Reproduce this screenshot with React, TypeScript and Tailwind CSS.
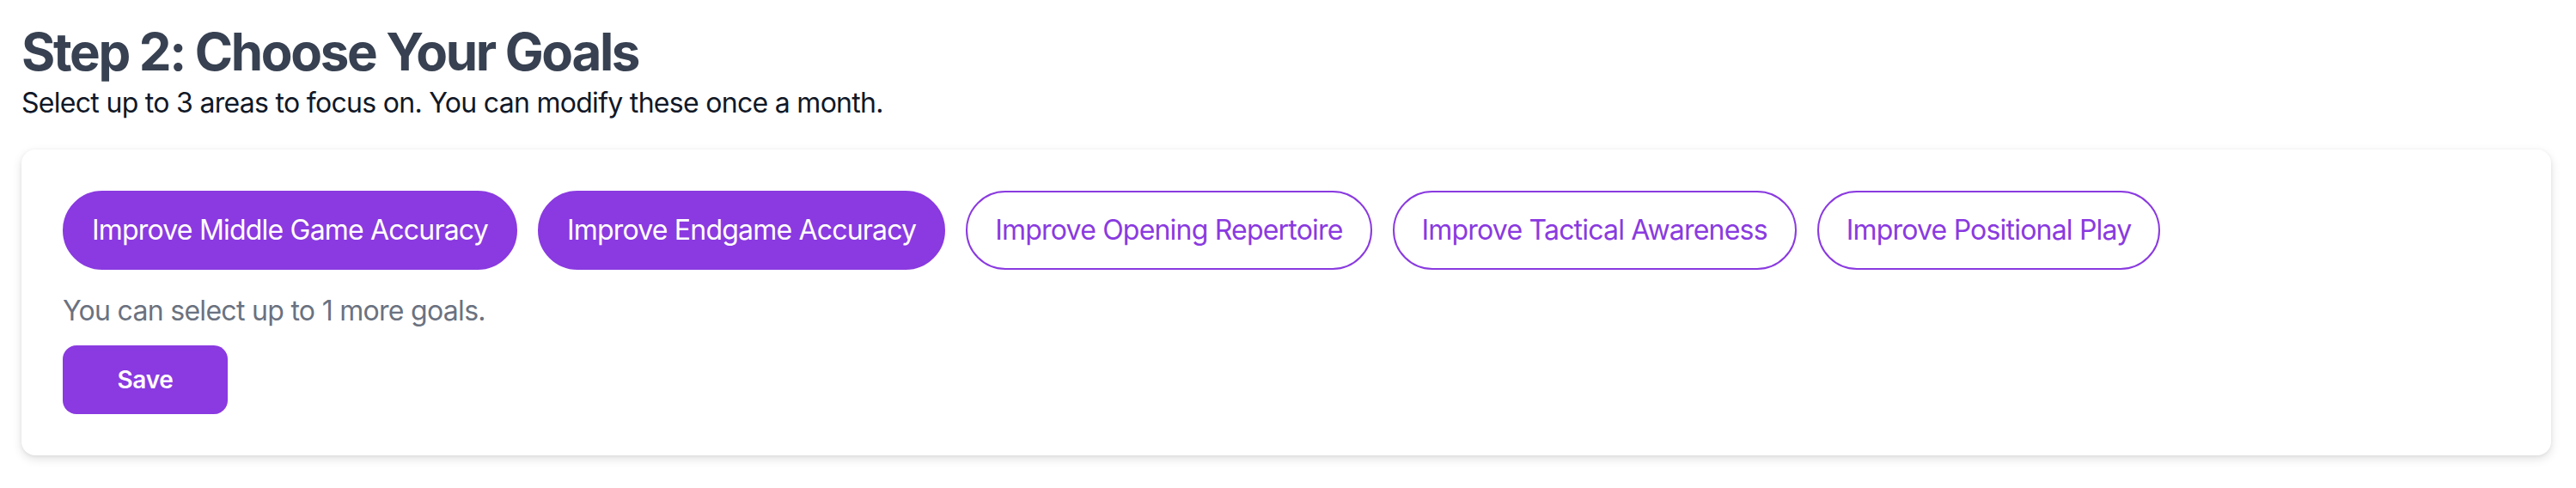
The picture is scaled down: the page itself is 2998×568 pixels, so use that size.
import { useState } from 'react'

// ----------------------------------------------------------------------

const GOALS = [
  'Improve Middle Game Accuracy',
  'Improve Endgame Accuracy',
  'Improve Opening Repertoire',
  'Improve Tactical Awareness',
  'Improve Positional Play',
]

const MAX_GOALS = 3

function GoalChip({
  label,
  selected,
  onClick,
}: {
  label: string
  selected: boolean
  onClick: () => void
}) {
  return (
    <button
      type="button"
      onClick={onClick}
      className={
        selected
          ? 'rounded-full border-2 border-[#8a3ae0] bg-[#8a3ae0] px-8 py-5 text-[32px] leading-[48px] tracking-[-0.025em] text-white'
          : 'rounded-full border-2 border-[#8a3ae0] bg-white px-8 py-5 text-[32px] leading-[48px] tracking-[-0.025em] text-[#8a3ae0]'
      }
    >
      {label}
    </button>
  )
}

export default function App() {
  const [selected, setSelected] = useState<string[]>([GOALS[0], GOALS[1]])

  const toggle = (goal: string) => {
    setSelected((prev) =>
      prev.includes(goal)
        ? prev.filter((g) => g !== goal)
        : prev.length < MAX_GOALS
          ? [...prev, goal]
          : prev
    )
  }

  const remaining = MAX_GOALS - selected.length

  return (
    <div className="min-h-[568px] bg-white pt-6 pl-[25px] pr-[29px] font-['Inter',sans-serif]">
      <h2 className="text-[60px] leading-[72px] font-bold tracking-[-0.039em] text-[#374151]">
        Step 2: Choose Your Goals
      </h2>
      <p className="text-[32px] leading-[48px] tracking-[-0.022em] text-[#111827]">
        Select up to 3 areas to focus on. You can modify these once a month.
      </p>

      <div className="mt-[30px] rounded-2xl bg-white p-12 shadow-[0_4px_12px_rgba(0,0,0,0.12),0_1px_4px_rgba(0,0,0,0.06)]">
        <div className="flex flex-wrap gap-6">
          {GOALS.map((goal) => (
            <GoalChip
              key={goal}
              label={goal}
              selected={selected.includes(goal)}
              onClick={() => toggle(goal)}
            />
          ))}
        </div>

        <p className="mt-6 text-[32px] leading-[48px] tracking-[-0.022em] text-[#6b7280]">
          You can select up to {remaining} more goals.
        </p>

        <button
          type="button"
          className="mt-4 h-20 w-48 rounded-2xl bg-[#8a3ae0] text-[28px] font-semibold tracking-[-0.01em] text-white"
        >
          Save
        </button>
      </div>
    </div>
  )
}
